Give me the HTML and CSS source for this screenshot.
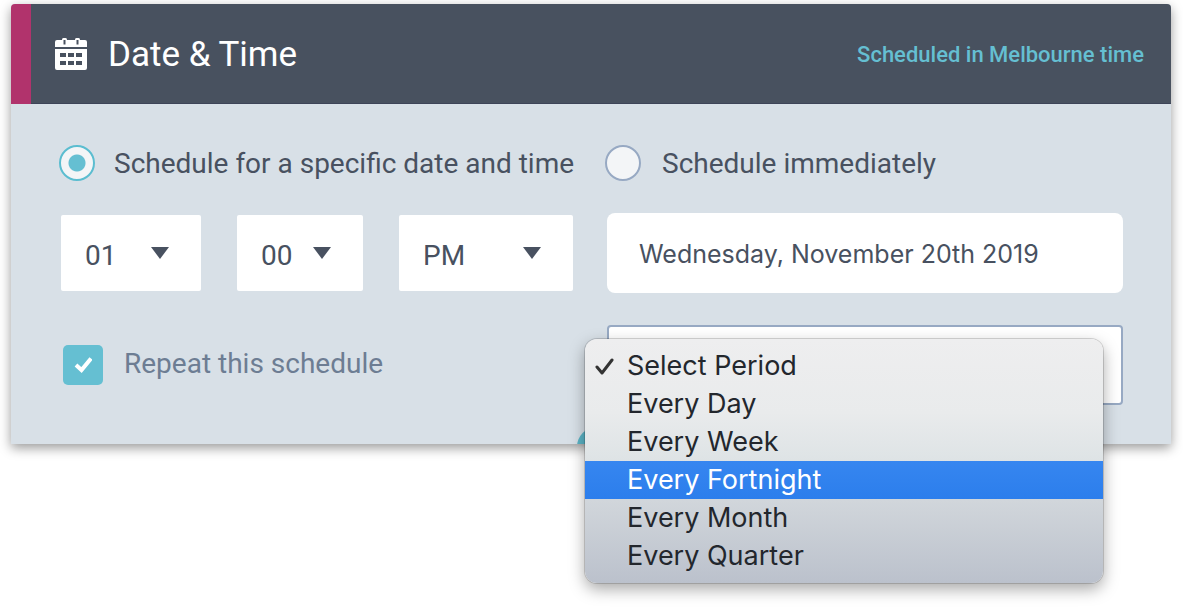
FILE: index.html
```html
<!DOCTYPE html>
<html lang="en">
<head>
    <meta charset="UTF-8">
    <meta name="viewport" content="width=device-width, initial-scale=1.0">
    <title>Date &amp; Time</title>
    <link rel="stylesheet" href="styles.css">
</head>
<body>
    <div class="card">
        <div class="card-header">
            <svg class="calendar" viewBox="0 0 32 32" width="32" height="32" aria-hidden="true">
                <path fill="#fff" fill-rule="evenodd" d="M2 2H7C7 0 8 0 9.500 0S12 0 12 2H20C20 0 21 0 22.500 0S25 0 25 2H30Q32 2 32 4V9H0V4Q0 2 2 2ZM8.500 2V6.500H10.500V2ZM21.500 2V6.500H23.500V2ZM0 11H32V30Q32 32 30 32H2Q0 32 0 30ZM5 15V19H11V15ZM13 15V19H19V15ZM21 15V19H27V15ZM5 23V27H11V23ZM13 23V27H19V23ZM21 23V27H27V23Z"/>
            </svg>
            <h1>Date &amp; Time</h1>
            <a href="#">Scheduled in Melbourne time</a>
        </div>
        <form class="card-body">
            <label class="choice">
                <input type="radio" name="when" checked>
                <span>Schedule for a specific date and time</span>
            </label>
            <label class="choice choice-now">
                <input type="radio" name="when">
                <span>Schedule immediately</span>
            </label>
            <div class="time">
                <div class="select hour">
                    <select aria-label="Hour"><option>01</option></select>
                </div>
                <div class="select minute">
                    <select aria-label="Minute"><option>00</option></select>
                </div>
                <div class="select ampm">
                    <select aria-label="AM or PM"><option>PM</option><option>AM</option></select>
                </div>
            </div>
            <input class="date" type="text" aria-label="Date" value="Wednesday, November 20th 2019">
            <label class="repeat">
                <span class="tick">
                    <input type="checkbox" checked>
                    <svg viewBox="0 0 18 16" width="18" height="16" aria-hidden="true">
                        <path d="M2 8 7.500 13 17 1.500" fill="none" stroke="#fff" stroke-width="4"/>
                    </svg>
                </span>
                <span class="repeat-text">Repeat this schedule</span>
            </label>
            <div class="period">
                <select aria-label="Period"><option>Select Period</option></select>
                <ul class="menu" role="listbox" aria-label="Period">
                    <li role="option" aria-selected="true">
                        <svg class="check" viewBox="0 0 20 20" width="20" height="20" aria-hidden="true">
                            <path d="M2 10 7 16 17 3" fill="none" stroke="#333" stroke-width="3" stroke-linecap="round" stroke-linejoin="round"/>
                        </svg>Select Period
                    </li>
                    <li role="option">Every Day</li>
                    <li role="option">Every Week</li>
                    <li role="option" class="active">Every Fortnight</li>
                    <li role="option">Every Month</li>
                    <li role="option">Every Quarter</li>
                </ul>
            </div>
            <!-- round button cut off by the bottom edge of the card -->
            <div class="clip"><button type="button" class="more" aria-label="Add"></button></div>
        </form>
    </div>
</body>
</html>
```
FILE: styles.css
```css
* {
    margin: 0;
    padding: 0;
    box-sizing: border-box;
}

body {
    min-height: 100vh;
    padding: 4px 12px 32px 11px;
    background: #fff;
    font-family: Roboto, "Liberation Sans", sans-serif;
    font-size: 28px;
    color: #485160;
}

input, select, button {
    font: inherit;
    color: inherit;
    border: none;
    outline: none;
    appearance: none;
}

.card {
    border-radius: 4px 4px 0 0;
    background: #d8e0e7;
    box-shadow: 0 4px 12px rgba(0, 0, 0, 0.4);
}

.card-header {
    display: flex;
    align-items: center;
    height: 100px;
    padding: 0 27px 0 24px;
    border-left: 20px solid #b1336c;
    border-radius: 4px 4px 0 0;
    background: #48515f;
    box-shadow: inset 0 -1px #3d4458;
}

.card-header h1 {
    margin-left: 21px;
    font-size: 35px;
    font-weight: 400;
    color: #fff;
}

.card-header a {
    margin-left: auto;
    font-size: 22px;
    font-weight: 500;
    color: #65bfd2;
    text-decoration: none;
}

.card-body {
    position: relative;
    display: grid;
    grid-template-columns: 1fr 1fr;
    gap: 32px;
    align-items: center;
    padding: 41px 48px 39px;
}

.choice {
    display: flex;
    align-items: center;
    gap: 19px;
    height: 36px;
    white-space: nowrap;
}

.choice-now {
    gap: 21px;
    margin-left: -2px;
}

.choice input {
    flex: none;
    width: 36px;
    height: 36px;
    border: 2px solid #97a9c3;
    border-radius: 50%;
    background: #f3f5f7;
}

.choice input:checked {
    border-color: #5bbdd0;
    background: radial-gradient(circle, #65bfd2 8px, #f3f5f7 9px);
}

.time {
    display: flex;
    gap: 36px;
    padding: 0 2px;
}

.select {
    position: relative;
}

.hour {
    flex: 140 1 0;
}

.minute {
    flex: 126 1 0;
}

.ampm {
    flex: 174 1 0;
}

.select select {
    width: 100%;
    height: 76px;
    padding: 4px 0 0 24px;
    border-radius: 2px;
    background: #fff;
}

.select::after {
    content: "";
    position: absolute;
    right: 32px;
    top: 32px;
    border: 9px solid transparent;
    border-top: 12px solid #485160;
    border-bottom: none;
    pointer-events: none;
}

.date {
    width: 100%;
    height: 80px;
    padding: 2px 32px 0;
    border-radius: 8px;
    background: #fff;
    font-family: Inter, sans-serif;
    font-size: 25px;
}

.repeat {
    display: flex;
    align-items: center;
    gap: 21px;
    margin-left: 4px;
    color: #6d7d93;
}

.repeat-text {
    padding-bottom: 4px;
}

.tick {
    display: grid;
    place-items: center;
}

.tick input, .tick svg {
    grid-area: 1 / 1;
}

.tick input {
    width: 40px;
    height: 40px;
    border-radius: 5px;
    background: #65bfd2;
}

.period {
    position: relative;
}

.period select {
    display: block;
    width: 100%;
    height: 80px;
    padding: 0 32px;
    border: 2px solid #97a9c3;
    border-radius: 4px;
    background: #fff;
}

.menu {
    position: absolute;
    z-index: 2;
    left: -22px;
    right: 20px;
    top: 14px;
    padding: 8px 0;
    border-radius: 12px;
    background: linear-gradient(#eeeeef, #e9ebec 30%, #dfe4e6 48%, #d1d6db 66%, #bbc1cc);
    box-shadow: 0 0 0 1px rgba(0, 0, 0, 0.15), 0 6px 16px rgba(0, 0, 0, 0.35);
    list-style: none;
    font-family: Inter, sans-serif;
    font-size: 27px;
    color: #23272d;
}

.menu li {
    position: relative;
    height: 38px;
    padding-left: 42px;
    line-height: 38px;
}

.menu .active {
    background: linear-gradient(#3686f0, #2c7eec);
    color: #fff;
}

.check {
    position: absolute;
    left: 10px;
    top: 10px;
}

.clip {
    position: absolute;
    inset: 0;
    overflow: hidden;
    pointer-events: none;
}

.more {
    position: absolute;
    left: 566px;
    bottom: -23px;
    width: 40px;
    height: 40px;
    border-radius: 50%;
    background: #5bb5c7;
}
```
